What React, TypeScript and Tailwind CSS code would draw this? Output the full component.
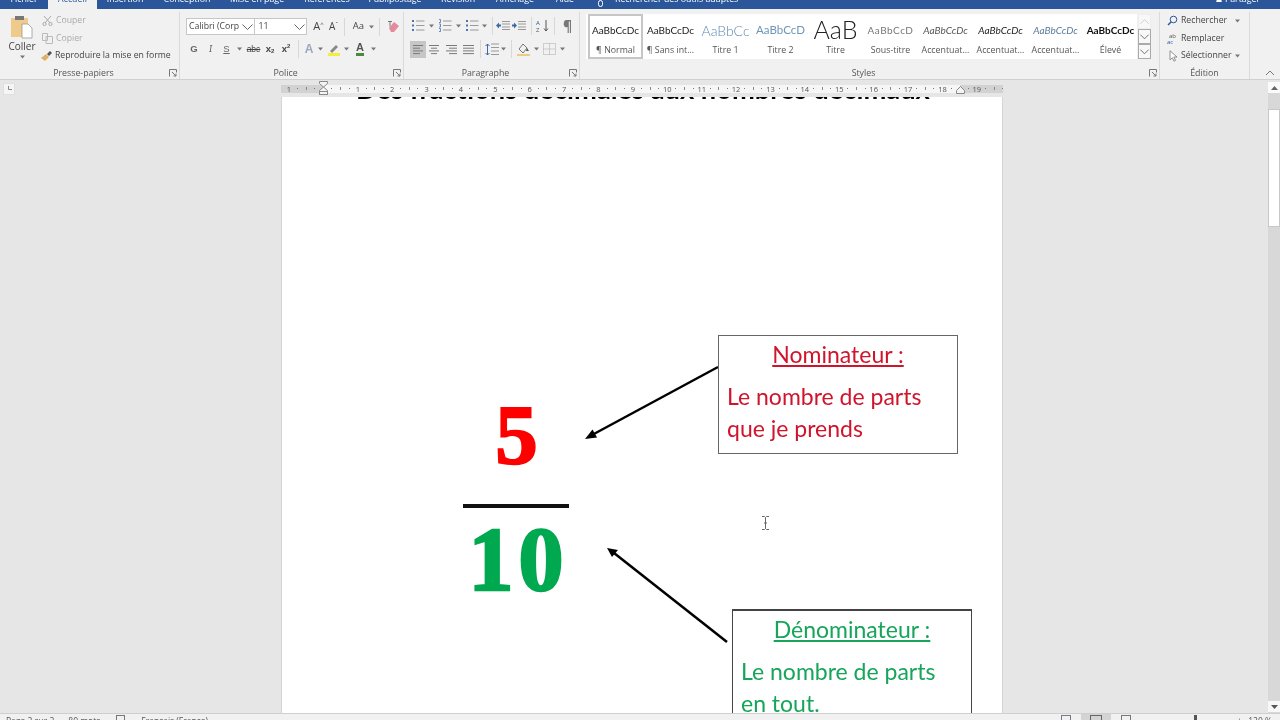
import React from "react";

const ui = { fontFamily: '"Open Sans","Noto Sans",sans-serif' };

const Caret = () => (
  <svg width="7" height="4" viewBox="0 0 7 4" className="shrink-0"><path d="M1 .5h5L3.5 3.5z" fill="#777" /></svg>
);
const Sep = ({ w }: { w: number }) => (
  <div className="flex justify-center shrink-0 h-[18px]" style={{ width: w }}><div className="w-px bg-[#d8d8d8]" /></div>
);
const Cell = ({ w, children, className = "" }: { w: number; children?: React.ReactNode; className?: string }) => (
  <div className={`flex items-center justify-center shrink-0 h-[18px] ${className}`} style={{ width: w }}>{children}</div>
);
const Launcher = () => (
  <svg width="8" height="8" viewBox="0 0 8 8" className="absolute right-[2px] bottom-[2px]">
    <path d="M.5 7.500v-7h7v3M3 3l4 4M4.500 7H7V4.500" fill="none" stroke="#777" strokeWidth="1" />
  </svg>
);
const Lines = ({ kind }: { kind: "l" | "c" | "r" | "j" }) => {
  const rows = kind === "l" ? [[1, 11], [1, 8], [1, 11], [1, 8]] : kind === "c" ? [[1, 11], [3, 9], [1, 11], [3, 9]] : kind === "r" ? [[1, 12], [4, 12], [1, 12], [4, 12]] : [[1, 12], [1, 12], [1, 12], [1, 12]];
  return (
    <svg width="13" height="11" viewBox="0 0 13 11">
      {rows.map((r, i) => <path key={i} d={`M${r[0]} ${1.5 + i * 2.7}H${r[1]}`} stroke="#7a7a7a" strokeWidth="1" />)}
    </svg>
  );
};
const ListIcon = ({ color = "#4a74ad", n = false }: { color?: string; n?: boolean }) => (
  <svg width="14" height="13" viewBox="0 0 14 13">
    {[2, 6.5, 11].map((y) => (
      <g key={y}>
        {n ? <path d={`M1 ${y - 1.5}h1.500v3H1`} fill="none" stroke={color} strokeWidth=".8" /> : <rect x="1" y={y - 1} width="2" height="2" fill={color} />}
        <path d={`M5 ${y}h8.500`} stroke="#999" />
      </g>
    ))}
  </svg>
);
const Indent = ({ dir }: { dir: 1 | -1 }) => (
  <svg width="14" height="11" viewBox="0 0 14 11">
    <path d="M6 1.500h8M6 4h8M6 7h8M6 9.500h8" stroke="#999" />
    <path d={dir < 0 ? "M0 5.500l3-3v2h2v2H3v2z" : "M5 5.500l-3-3v2H0v2h2v2z"} fill="#3d69a8" />
  </svg>
);

const Styl = ({ sample, label, cls, sel = false }: { sample: string; label: string; cls: string; sel?: boolean }) => (
  <div className={`w-[55px] h-full shrink-0 flex flex-col items-center overflow-hidden ${sel ? "border-2 border-[#c6c6c6]" : "border-2 border-transparent"}`}>
    <div className="h-[28px] w-full flex items-center justify-center overflow-hidden">
      <span className={`whitespace-nowrap ${cls}`} style={{ fontFamily: "Lato,sans-serif" }}>{sample}</span>
    </div>
    <div className="text-[8.8px] leading-[12px] text-[#555] whitespace-nowrap">{label}</div>
  </div>
);

const tabs: [string, number][] = [
  ["Fichier", 48], ["Accueil", 49], ["Insertion", 56], ["Conception", 68], ["Mise en page", 72], ["Références", 68], ["Publipostage", 68], ["Révision", 58], ["Affichage", 56], ["Aide", 44],
];

const rulerCells = ["1", "", "1","2","3","4","5","6","7","8","9","10","11","12","13","14","15","16","17","18","19"];

function TopBar() {
  return (
    <div className="h-[9px] bg-[#2b579a] flex overflow-hidden shrink-0 text-white text-[8.8px] leading-[13px]">
      {tabs.map(([t, w]) => (
        <div key={t} className={`flex justify-center shrink-0 ${t === "Accueil" ? "bg-[#f1f1f1] text-[#2b579a]" : ""}`} style={{ width: w }}>
          <span className="-mt-[7px] whitespace-nowrap">{t}</span>
        </div>
      ))}
      <div className="ml-[11px] w-[5px] h-[7px] rounded-full border border-white mt-0 shrink-0" />
      <span className="ml-[12px] -mt-[7px] whitespace-nowrap">Rechercher des outils adaptés</span>
      <span className="ml-auto mr-[20px] -mt-[7px] whitespace-nowrap">♟ Partager</span>
    </div>
  );
}

function Ribbon() {
  const group = "relative h-full shrink-0 flex flex-col border-r border-[#dadada]";
  const label = "h-[15px] pt-[4px] flex items-center justify-center text-[8.8px] text-[#555] shrink-0";
  return (
    <div className="h-[71px] pt-[3px] bg-[#f1f1f1] border-b border-[#d0d0d0] flex shrink-0 text-[#444]">
      {/* Presse-papiers */}
      <div className={`${group} w-[180px]`}>
        <div className="flex-1 flex">
          <div className="w-[42px] flex flex-col items-center pt-[3px] pl-[2px]">
            <svg width="24" height="24" viewBox="0 0 24 24">
              <rect x="1" y="3" width="17" height="19" fill="#eecb8a" />
              <rect x="5" y="1" width="9" height="4" fill="#777" />
              <path d="M12 9h6l4 4v10H12z" fill="#fff" stroke="#999" strokeWidth=".8" />
            </svg>
            <div className="text-[10px] leading-[14px]">Coller</div>
            <div className="mt-[2px]"><Caret /></div>
          </div>
          <div className="flex flex-col text-[8.7px] leading-[17.5px]">
            <div className="flex items-center gap-[3px] text-[#aaa]">
              <svg width="11" height="11" viewBox="0 0 11 11"><path d="M2 1l6 7M9 1L3 8" stroke="#aaa" fill="none" /><circle cx="2.500" cy="9" r="1.600" fill="none" stroke="#aaa" /><circle cx="8.500" cy="9" r="1.600" fill="none" stroke="#aaa" /></svg>
              Couper
            </div>
            <div className="flex items-center gap-[3px] text-[#aaa]">
              <svg width="11" height="11" viewBox="0 0 11 11"><path d="M.5.5h5v7h-5zM4 3.500h6.500v7H4z" fill="#f1f1f1" stroke="#bbb" /></svg>
              Copier
            </div>
            <div className="flex items-center gap-[2px] whitespace-nowrap -ml-[1px]">
              <svg width="12" height="11" viewBox="0 0 12 11"><path d="M0 8l5-4 3 3-4 4z" fill="#e0b060" /><path d="M6 4l3-3 2 2-3 3z" fill="#555" /></svg>
              Reproduire la mise en forme
            </div>
          </div>
        </div>
        <div className={`${label} pr-[12px]`}>Presse-papiers</div>
        <Launcher />
      </div>

      {/* Police */}
      <div className={`${group} w-[224px]`}>
        <div className="flex-1 flex flex-col pl-[6px]">
          <div className="h-[29px] flex items-center">
            <div className="w-[70px] h-[17px] bg-white border border-[#c6c6c6] flex items-center pl-[2px] text-[8.7px] whitespace-nowrap overflow-hidden">
              Calibri (Corp
              <svg width="11" height="6" viewBox="0 0 11 6" className="ml-auto mr-[1px] shrink-0"><path d="M.5.5l5 5 5-5" fill="none" stroke="#666" /></svg>
            </div>
            <div className="w-[52px] h-[17px] bg-white border border-[#c6c6c6] border-l-0 flex items-center pl-[3px] text-[8.7px]">
              11
              <svg width="11" height="6" viewBox="0 0 11 6" className="ml-auto mr-[1px]"><path d="M.5.5l5 5 5-5" fill="none" stroke="#666" /></svg>
            </div>
            <Cell w={19} className="text-[11px] pl-[4px]">A<sup className="text-[6px]">^</sup></Cell>
            <Cell w={15} className="text-[10px]">A<sup className="text-[6px]">ˇ</sup></Cell>
            <Sep w={6} />
            <Cell w={17} className="text-[9.5px] ml-[3px]">Aa</Cell>
            <Cell w={8}><Caret /></Cell>
            <Sep w={8} />
            <Cell w={20}>
              <svg width="13" height="13" viewBox="0 0 13 13"><path d="M2 8l5-6 5 4-5 6H4z" fill="#e58a9a" /><path d="M1 1.500h4M3 1.500v5" stroke="#777" /></svg>
            </Cell>
          </div>
          <div className="h-[16px] flex items-center text-[9.5px]" style={{ fontFamily: '"Liberation Sans",sans-serif' }}>
            <Cell w={16} className="font-bold text-[#666]">G</Cell>
            <Cell w={17} className="italic font-serif text-[#666]">I</Cell>
            <Cell w={15} className="underline text-[#666]">S</Cell>
            <Cell w={11}><Caret /></Cell>
            <Cell w={17} className="line-through text-[8.5px]">abc</Cell>
            <Cell w={16} className="font-bold">x<sub className="text-[6px]">2</sub></Cell>
            <Cell w={16} className="font-bold">x<sup className="text-[6px]">2</sup></Cell>
            <Sep w={8} />
            <Cell w={14} className="text-[12px] text-[#9aa8bd] font-bold">A</Cell>
            <Cell w={9}><Caret /></Cell>
            <Cell w={17}>
              <svg width="14" height="13" viewBox="0 0 14 13"><path d="M3 8l6-6 2 2-6 6z" fill="#888" /><rect x="1" y="10" width="12" height="3" fill="#f2ee3a" /></svg>
            </Cell>
            <Cell w={9}><Caret /></Cell>
            <Cell w={18} className="font-bold text-[11px]">
              <span className="border-b-[3px] border-[#4b8a3d] leading-[11px] text-[#555]">A</span>
            </Cell>
            <Cell w={8}><Caret /></Cell>
          </div>
        </div>
        <div className={`${label} pr-[12px]`}>Police</div>
        <Launcher />
      </div>

      {/* Paragraphe */}
      <div className={`${group} w-[176px]`}>
        <div className="flex-1 flex flex-col pl-[6px]">
          <div className="h-[27px] flex items-center">
            <Cell w={16}><ListIcon /></Cell>
            <Cell w={10}><Caret /></Cell>
            <Cell w={17}><ListIcon n /></Cell>
            <Cell w={10}><Caret /></Cell>
            <Cell w={17}><ListIcon /></Cell>
            <Cell w={9}><Caret /></Cell>
            <Sep w={6} />
            <Cell w={16}><Indent dir={-1} /></Cell>
            <Cell w={16}><Indent dir={1} /></Cell>
            <Sep w={8} />
            <Cell w={15}>
              <svg width="14" height="13" viewBox="0 0 14 13"><text x="0" y="6" fontSize="6" fill="#2b579a">A</text><text x="0" y="13" fontSize="6" fill="#555">Z</text><path d="M10 1v11M8 9.500l2 2.500 2-2.500" fill="none" stroke="#555" /></svg>
            </Cell>
            <Sep w={9} />
            <Cell w={17} className="text-[14px] font-bold text-[#777]">¶</Cell>
          </div>
          <div className="h-[16px] mt-[2px] flex items-center">
            <Cell w={16} className="bg-[#c6c6c6] !h-[17px]"><Lines kind="l" /></Cell>
            <Cell w={17}><Lines kind="c" /></Cell>
            <Cell w={17}><Lines kind="r" /></Cell>
            <Cell w={16}><Lines kind="j" /></Cell>
            <Sep w={8} />
            <Cell w={15}>
              <svg width="14" height="13" viewBox="0 0 14 13"><path d="M6 1h8M6 4.500h8M6 8h8M6 11.500h8" stroke="#999" /><path d="M2.500 1v11M.5 3l2-2 2 2M.5 10l2 2 2-2" fill="none" stroke="#3d69a8" /></svg>
            </Cell>
            <Cell w={8}><Caret /></Cell>
            <Sep w={8} />
            <Cell w={17}>
              <svg width="15" height="14" viewBox="0 0 15 14"><path d="M3 7l4-5 4 4-4 5z" fill="none" stroke="#777" /><path d="M11 6l2 3h-3z" fill="#555" /><path d="M1 13h13" stroke="#e6c060" strokeWidth="1.500" /></svg>
            </Cell>
            <Cell w={9}><Caret /></Cell>
            <Cell w={17}>
              <svg width="13" height="12" viewBox="0 0 13 12"><path d="M.5.5h12v11H.5zM6.500.5v11M.5 6h12" fill="none" stroke="#aaa" strokeDasharray="1 1" /></svg>
            </Cell>
            <Cell w={9}><Caret /></Cell>
          </div>
        </div>
        <div className={`${label} pr-[12px]`}>Paragraphe</div>
        <Launcher />
      </div>

      {/* Styles */}
      <div className={`${group} w-[580px]`}>
        <div className="flex-1 flex pl-[6px] pt-[2px]">
          <div className="w-[551px] h-[45px] bg-white flex pl-[2px]">
            <Styl sel sample="AaBbCcDc" label="¶ Normal" cls="text-[10px] text-[#222]" />
            <Styl sample="AaBbCcDc" label="¶ Sans int..." cls="text-[10px] text-[#222]" />
            <Styl sample="AaBbCc" label="Titre 1" cls="text-[14px] font-light text-[#5f8bb0]" />
            <Styl sample="AaBbCcD" label="Titre 2" cls="text-[11.5px] text-[#6f96b8]" />
            <Styl sample="AaB" label="Titre" cls="text-[25px] text-[#222] font-light" />
            <Styl sample="AaBbCcD" label="Sous-titre" cls="text-[10px] tracking-[.5px] text-[#777]" />
            <Styl sample="AaBbCcDc" label="Accentuat..." cls="text-[10px] italic text-[#555]" />
            <Styl sample="AaBbCcDc" label="Accentuat..." cls="text-[10px] italic text-[#222]" />
            <Styl sample="AaBbCcDc" label="Accentuat..." cls="text-[10px] italic text-[#5a7a98]" />
            <Styl sample="AaBbCcDc" label="Élevé" cls="text-[10px] font-bold text-[#111]" />
          </div>
          <div className="w-[13px] h-[45px] ml-[1px] flex flex-col">
            {["M1.500 7L6 2.500 10.500 7", "M1.500 2.500L6 7 10.500 2.500", "M1.500 2.500L6 7 10.500 2.500"].map((d, i) => (
              <div key={i} className={`flex-1 flex items-center justify-center border ${i === 0 ? "border-[#eee]" : "border-[#aaa]"} bg-[#f8f8f8]`}>
                <svg width="12" height="9" viewBox="0 0 12 9"><path d={d} fill="none" stroke={i === 0 ? "#ccc" : "#666"} /></svg>
              </div>
            ))}
          </div>
        </div>
        <div className={`${label} pr-[12px]`}>Styles</div>
        <Launcher />
      </div>

      {/* Edition */}
      <div className="relative h-full w-[90px] shrink-0 flex flex-col border-r border-[#dadada]">
        <div className="flex-1 flex flex-col pl-[7px] text-[8.7px] leading-[17.5px]">
          <div className="flex items-center gap-[3px]">
            <svg width="11" height="11" viewBox="0 0 11 11"><circle cx="6.500" cy="4.500" r="3.300" fill="none" stroke="#2b579a" /><path d="M4 7l-3 3" stroke="#2b579a" strokeWidth="1.400" /></svg>
            Rechercher <span className="ml-[4px]"><Caret /></span>
          </div>
          <div className="flex items-center gap-[2px]">
            <svg width="12" height="12" viewBox="0 0 12 12"><text x="2" y="5.500" fontSize="6" fill="#555">ab</text><text x="0" y="11.500" fontSize="6" fill="#2b579a">ac</text></svg>
            Remplacer
          </div>
          <div className="flex items-center gap-[3px] pl-[2px]">
            <svg width="9" height="12" viewBox="0 0 9 12"><path d="M1 .8v9l2.400-2 1.600 3.400 1.500-.8L4.900 7H8z" fill="#fff" stroke="#777" strokeWidth=".8" /></svg>
            Sélectionner<Caret />
          </div>
        </div>
        <div className={label}>Édition</div>
      </div>

      <div className="flex-1 flex items-end justify-center pb-[3px]">
        <svg width="10" height="6" viewBox="0 0 10 6" className="ml-[9px]"><path d="M1 5l4-4 4 4" fill="none" stroke="#777" /></svg>
      </div>
    </div>
  );
}

function Ruler() {
  return (
    <div className="h-[17px] bg-[#e6e6e6] flex items-center shrink-0 relative">
      <div className="ml-[3px] w-[12px] h-[12px] bg-[#f5f5f5] border border-[#e0e0e0] flex items-center justify-center shrink-0">
        <svg width="5" height="5" viewBox="0 0 5 5"><path d="M1.500 0v3.500h3.500" fill="none" stroke="#888" /></svg>
      </div>
      <div className="ml-[266px] w-[722px] h-[8px] bg-[linear-gradient(90deg,#d2d2d2_42px,#f6f6f6_42px,#f6f6f6_679px,#d2d2d2_679px)] flex pl-[3px] text-[7.5px] leading-[8px] text-[#555] overflow-hidden shrink-0">
        {rulerCells.map((n, i) => (
          <div key={i} className="w-[34.4px] shrink-0 flex items-center">
            <span className="w-[10px] text-center shrink-0">{n}</span>
            <div className="ml-[3.1px] flex items-center gap-[7.6px]">
              <div className="w-px h-px bg-[#777]" />
              <div className="w-px h-[3px] bg-[#888]" />
              <div className="w-px h-px bg-[#777]" />
            </div>
          </div>
        ))}
      </div>
      <svg width="9" height="14" viewBox="0 0 9 14" className="absolute left-[319px] top-[1px]">
        <path d="M.5.5h8v2L4.500 6 .5 2.500z M.5 11.500v-2L4.500 6l4 3.500v2z" fill="#f4f4f4" stroke="#888" />
        <rect x=".5" y="10.500" width="8" height="3" fill="#f4f4f4" stroke="#888" />
      </svg>
      <svg width="9" height="8" viewBox="0 0 9 8" className="absolute left-[956px] top-[6px]">
        <path d="M.5 7.500v-3l4-4 4 4v3z" fill="#f4f4f4" stroke="#888" />
      </svg>
    </div>
  );
}

function Scrollbar() {
  return (
    <div className="w-[12px] h-full bg-[#d8d8d8] flex flex-col shrink-0">
      <div className="h-[15px] -mt-[15px] bg-[#d8d8d8] shrink-0 relative">
        <div className="h-[11px] bg-[#fbfbfb] flex items-center justify-center">
          <svg width="7" height="4" viewBox="0 0 7 4"><path d="M3.500 0l3.500 4H0z" fill="#666" /></svg>
        </div>
      </div>
      <div className="h-[118px] mt-[12px] bg-white border border-[#c8c8c8] shrink-0" />
      <div className="mt-auto h-[11px] bg-[#f8f8f8] flex items-center justify-center mb-[1px]">
        <svg width="7" height="4" viewBox="0 0 7 4"><path d="M3.500 4L7 0H0z" fill="#555" /></svg>
      </div>
    </div>
  );
}

function Page() {
  const red = "#d0142c";
  const green = "#16a55a";
  const serif = { fontFamily: '"Liberation Serif",serif' };
  return (
    <div className="relative w-[722px] h-full ml-[281px] bg-white shrink-0 overflow-hidden border-x border-[#d4d4d4]" style={{ fontFamily: "Lato,sans-serif" }}>
      <h1 className="absolute left-[74px] top-[-23px] text-[27.3px] leading-[30px] font-bold text-black whitespace-nowrap">Des fractions décimales aux nombres décimaux</h1>

      <div className="absolute left-[182px] top-[296px] w-[105px] text-center text-[#ff0000] text-[85px] leading-[85px] font-bold [-webkit-text-stroke:2px_#ff0000]" style={serif}>5</div>
      <div className="absolute left-[181px] top-[407px] w-[106px] h-[4px] bg-[#111]" />
      <div className="absolute left-[184px] top-[418px] w-[105px] text-center text-[#00a84f] text-[90px] leading-[90px] font-bold tracking-[5px] [-webkit-text-stroke:2.5px_#00a84f]" style={serif}>10</div>

      <svg className="absolute left-[290px] top-[260px]" width="160" height="300" viewBox="0 0 160 300">
        <path d="M146 10L20 78" stroke="#000" strokeWidth="2.500" />
        <path d="M13 82l12-1.500-4.500-8z" fill="#000" />
        <path d="M155 285L42 196" stroke="#000" strokeWidth="2.500" />
        <path d="M35 191l11 2-6 7z" fill="#000" />
      </svg>

      <div className="absolute left-[436px] top-[238px] w-[240px] h-[119px] border border-[#666] pl-[8px] pt-[3px]" style={{ color: red }}>
        <div className="text-center underline text-[23px] leading-[30px] pr-[8px]">Nominateur :</div>
        <div className="text-[23px] leading-[32px] mt-[11px] whitespace-nowrap">Le nombre de parts<br />que je prends</div>
      </div>

      <div className="absolute left-[450px] top-[512px] w-[240px] h-[119px] border border-[#444] border-t-2 pl-[8px] pt-[3px]" style={{ color: green }}>
        <div className="text-center underline text-[23px] leading-[30px] pr-[8px]">Dénominateur :</div>
        <div className="text-[23px] leading-[32px] mt-[11px] whitespace-nowrap">Le nombre de parts<br />en tout.</div>
      </div>

      <svg className="absolute left-[479px] top-[419px]" width="9" height="14" viewBox="0 0 9 14">
        <path d="M1 .5h2.500L4.500 1.500l1-1H8M4.500 1.500v11M1 13.500h2.500l1-1 1 1H8M3 7h3" fill="none" stroke="#666" />
      </svg>
    </div>
  );
}

function StatusBar() {
  return (
    <div className="h-[7px] bg-[#f1f1f1] border-t border-[#cfcfcf] flex overflow-hidden shrink-0 text-[8.5px] leading-[12px] text-[#555]">
      <span className="ml-[6px] mt-[1px] whitespace-nowrap">Page 2 sur 2</span>
      <span className="ml-[14px] mt-[1px] whitespace-nowrap">80 mots</span>
      <div className="ml-[16px] mt-[1px] w-[9px] h-[9px] border border-[#777] shrink-0" />
      <span className="ml-[16px] mt-[1px] whitespace-nowrap">Français (France)</span>
      <div className="ml-auto flex items-start h-full">
        <div className="w-[10px] h-[9px] mt-[1px] border border-[#778] mr-[10px]" />
        <div className="w-[30px] h-full bg-[#d4d4d4] flex justify-center mr-[10px]"><div className="w-[12px] h-[8px] mt-[1px] border border-[#666]" /></div>
        <div className="w-[10px] h-[9px] mt-[1px] border border-[#777] mr-[63px]" />
        <div className="w-[3px] h-[5px] mt-[1px] bg-[#555] mr-[40px]" />
        <span className="mt-[1px] mr-[6px]">+</span>
        <span className="mt-[1px] mr-[8px] whitespace-nowrap">120 %</span>
      </div>
    </div>
  );
}

export default function App() {
  return (
    <div className="w-[1280px] h-[720px] flex flex-col overflow-hidden bg-[#e6e6e6] [filter:blur(0.4px)]" style={ui}>
      <TopBar />
      <Ribbon />
      <Ruler />
      <div className="flex-1 min-h-0 flex">
        <div className="flex-1 flex min-w-0"><Page /></div>
        <Scrollbar />
      </div>
      <StatusBar />
    </div>
  );
}
